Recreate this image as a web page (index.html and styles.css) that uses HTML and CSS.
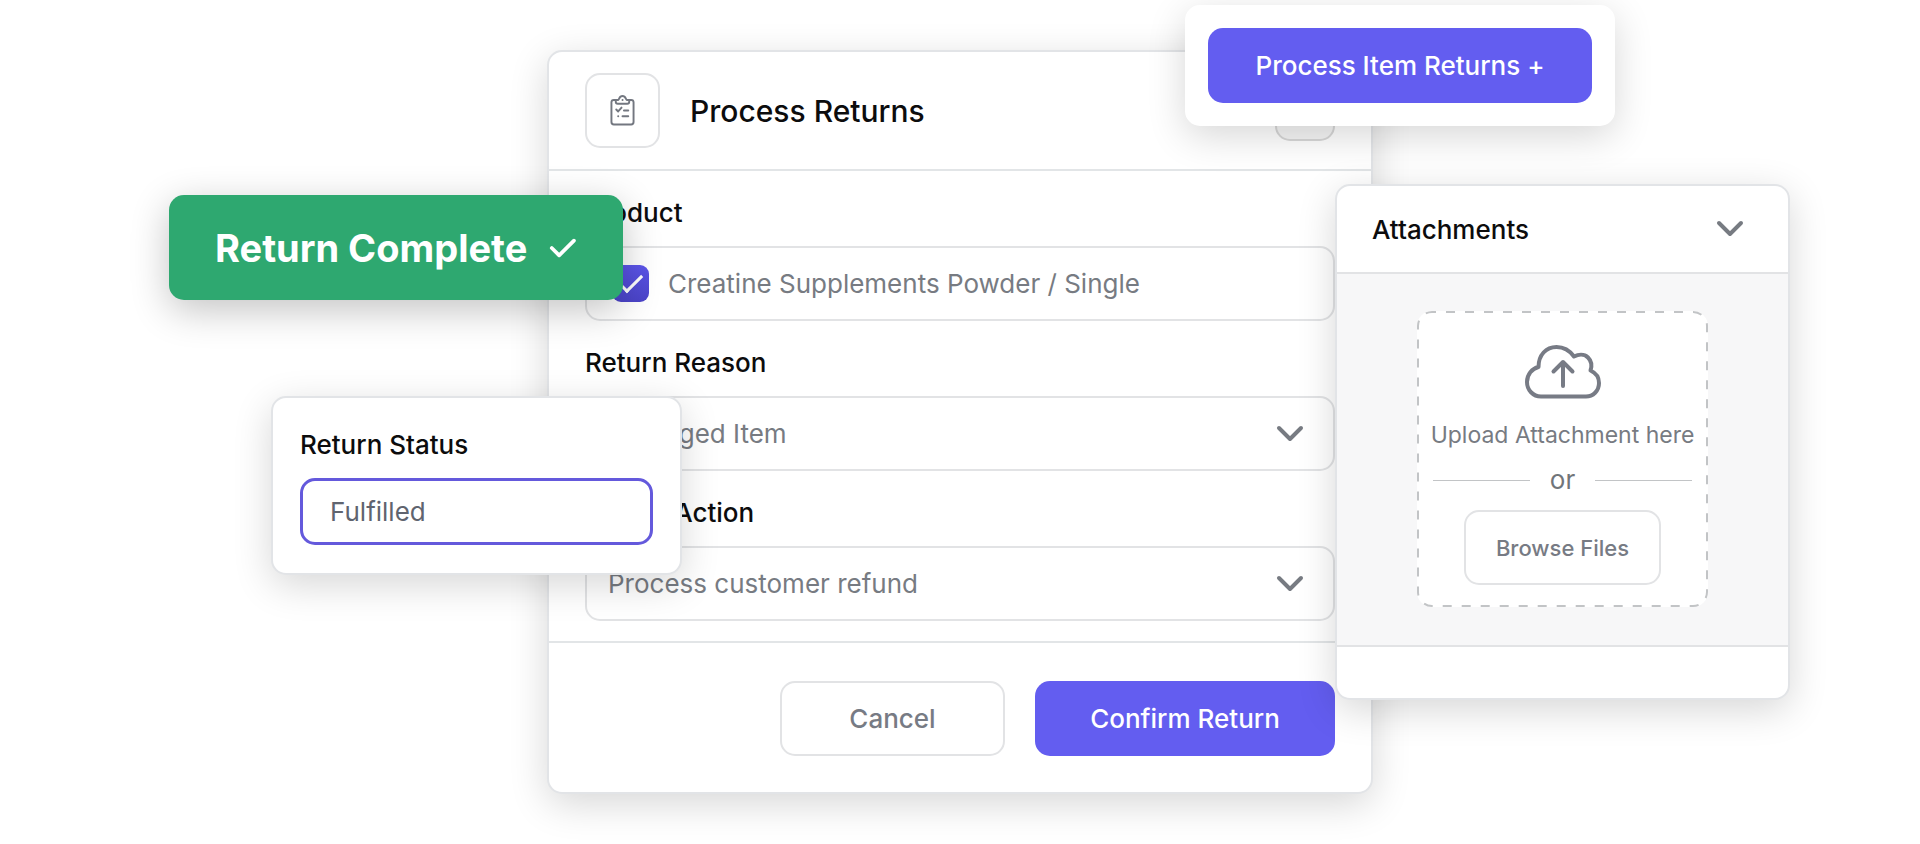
FILE: index.html
```html
<!DOCTYPE html>
<html lang="en">
<head>
    <meta charset="UTF-8">
    <meta name="viewport" content="width=device-width, initial-scale=1.0">
    <title>Process Returns</title>
    <link rel="stylesheet" href="styles.css">
</head>
<body>
    <main class="stage">
        <form class="card returns">
            <header class="returns-header">
                <span class="icon-box">
                    <svg width="25" height="33" viewBox="0 0 26 34" fill="none" stroke="#737780" stroke-width="2" stroke-linecap="round" stroke-linejoin="round">
                        <path d="M6 6H4a2.500 2.500 0 0 0-2.500 2.500V29A2.500 2.500 0 0 0 4 31.500H22a2.500 2.500 0 0 0 2.500-2.500V8.500A2.500 2.500 0 0 0 22 6H20"/>
                        <path d="M6 6H8.500C9.500 6 9.500 2 13 2S16.500 6 17.500 6H20V8a2 2 0 0 1-2 2H8a2 2 0 0 1-2-2Z"/>
                        <path d="M6.500 16l2 2 3.500-4M14.500 17H19M13 23H19M8.500 23h.1M13 6h.1"/>
                    </svg>
                </span>
                <h1>Process Returns</h1>
                <button type="button" class="close-btn" aria-label="Close"></button>
            </header>

            <div class="returns-body">
                <h2 class="field-label">Product</h2>
                <label class="field product">
                    <input type="checkbox" class="check" checked>
                    <span>Creatine Supplements Powder / Single</span>
                </label>

                <label class="field-label" for="reason">Return Reason</label>
                <div class="select">
                    <select class="field" id="reason">
                        <option>Damaged Item</option>
                    </select>
                    <svg class="chevron" width="28" height="18" viewBox="0 0 28 18"><path d="M3 3l11 11L25 3"/></svg>
                </div>

                <label class="field-label" for="action">Return Action</label>
                <div class="select">
                    <select class="field" id="action">
                        <option>Process customer refund</option>
                    </select>
                    <svg class="chevron" width="28" height="18" viewBox="0 0 28 18"><path d="M3 3l11 11L25 3"/></svg>
                </div>
            </div>

            <footer class="returns-footer">
                <button type="button" class="btn btn-outline btn-cancel">Cancel</button>
                <button type="button" class="btn btn-primary btn-confirm">Confirm Return</button>
            </footer>
        </form>

        <div class="card start">
            <button type="button" class="btn btn-primary">Process Item Returns +</button>
        </div>

        <div class="toast" role="status">
            Return Complete
            <svg width="30" height="24" viewBox="0 0 30 24"><path d="M3 12l8 8L27 4"/></svg>
        </div>

        <div class="card status">
            <label for="status">Return Status</label>
            <input type="text" id="status" value="Fulfilled">
        </div>

        <section class="card attachments">
            <header class="attachments-header">
                <h2>Attachments</h2>
                <svg class="chevron" width="28" height="18" viewBox="0 0 28 18"><path d="M3 3l11 11L25 3"/></svg>
            </header>
            <div class="attachments-body">
                <div class="dropzone">
                    <svg class="dashes"><rect x="1" y="1" rx="14"/></svg>
                    <svg class="cloud" width="76" height="54" viewBox="0 0 76 54">
                        <path d="M16 51.500C8 51.500 2 45 2 37C2 29.500 7 23.500 13.500 22C13.500 10 21 2 31.500 2C39 2 45 6 49 11.500C53 9.500 59 8.500 63 12.500C67 16.500 67 21 65.500 25.500C71 28 74 33 74 38C74 46 68 51.500 61 51.500Z"/>
                        <path d="M38 41V17M28.500 26.500L38 17l9.500 9.500"/>
                    </svg>
                    <p>Upload Attachment here</p>
                    <div class="or">or</div>
                    <button type="button" class="btn btn-outline btn-browse">Browse Files</button>
                </div>
            </div>
            <footer class="attachments-footer"></footer>
        </section>
    </main>
</body>
</html>
```
FILE: styles.css
```css
* {
    box-sizing: border-box;
}
body {
    margin: 0;
    background: #fff;
    color: #0c0c0d;
    font-family: Inter, "Liberation Sans", sans-serif;
    font-size: 26px;
    overflow-x: hidden;
}
h1, h2, p {
    margin: 0;
    font-weight: 500;
}
button, input, select {
    font: inherit;
}
.stage {
    position: relative;
    width: 826px;
    margin: 0 auto;
    padding: 50px 0;
}
.card {
    background: #fff;
    border: 2px solid #e2e4e7;
    border-radius: 15px;
    box-shadow: 0 10px 38px rgba(0, 0, 0, 0.16);
}

/* buttons */
.btn {
    height: 75px;
    border: 2px solid transparent;
    border-radius: 15px;
    font-weight: 500;
    cursor: pointer;
}
.btn-primary {
    background: #635df0;
    color: #fff;
}
.btn-outline {
    background: #fff;
    border-color: #e2e3e5;
    color: #777b84;
}

/* main form */
.returns-header {
    display: flex;
    align-items: center;
    height: 119px;
    padding: 0 36px;
    border-bottom: 2px solid #e2e5e7;
}
.icon-box {
    display: flex;
    align-items: center;
    justify-content: center;
    width: 75px;
    height: 75px;
    margin-right: 30px;
    border: 2px solid #e2e3e5;
    border-radius: 15px;
}
h1 {
    font-size: 30px;
}
.close-btn {
    width: 60px;
    height: 60px;
    margin-left: auto;
    background: #f6f6f6;
    border: 2px solid #d8d8d8;
    border-radius: 15px;
}
.returns-body {
    padding: 0 36px 20px;
    border-bottom: 2px solid #e2e5e7;
}
.field-label {
    display: block;
    padding: 26px 0 17px;
    font-size: 26px;
    font-weight: 500;
    line-height: 32px;
}
.field {
    display: flex;
    align-items: center;
    width: 100%;
    height: 75px;
    padding: 0 21px;
    background: none;
    border: 2px solid #e2e3e5;
    border-radius: 15px;
    color: #777b82;
    appearance: none;
}
.product {
    gap: 19px;
    padding: 0 25px;
}
.check {
    display: grid;
    place-items: center;
    width: 37px;
    height: 37px;
    margin: 0;
    background: linear-gradient(#5c55ea, #4b44c8);
    border-radius: 9px;
    appearance: none;
}
.check:checked::after {
    content: "";
    width: 10px;
    height: 20px;
    margin-bottom: 6px;
    border: solid #fff;
    border-width: 0 3px 3px 0;
    transform: rotate(45deg);
}
.select {
    position: relative;
}
.chevron {
    fill: none;
    stroke: #777b82;
    stroke-width: 4;
    stroke-linecap: round;
    stroke-linejoin: round;
}
.select .chevron {
    position: absolute;
    top: 29px;
    right: 31px;
    pointer-events: none;
}
.returns-footer {
    display: flex;
    justify-content: flex-end;
    gap: 30px;
    padding: 38px 36px 36px;
}
.btn-cancel {
    width: 225px;
}
.btn-confirm {
    width: 300px;
}

/* floating pieces */
.start {
    position: absolute;
    top: 5px;
    left: 638px;
    padding: 21px;
    border-color: #fff;
}
.start .btn {
    display: block;
    width: 384px;
}
.toast {
    position: absolute;
    top: 195px;
    left: -378px;
    display: flex;
    align-items: center;
    gap: 22px;
    width: 454px;
    height: 105px;
    padding: 0 46px;
    background: #2ea870;
    border-radius: 15px;
    box-shadow: 0 10px 38px rgba(0, 0, 0, 0.24);
    color: #fff;
    font-size: 38px;
    font-weight: 700;
    white-space: nowrap;
}
.toast svg {
    fill: none;
    stroke: #fff;
    stroke-width: 4;
    stroke-linecap: round;
    stroke-linejoin: round;
}
.status {
    position: absolute;
    top: 396px;
    left: -276px;
    width: 411px;
    padding: 31px 27px 28px;
}
.status label {
    display: block;
    margin-bottom: 17px;
    font-weight: 500;
    line-height: 32px;
}
.status input {
    display: block;
    width: 100%;
    height: 67px;
    padding: 0 27px;
    background: #fff;
    border: 3px solid #6459dc;
    border-radius: 15px;
    color: #60646f;
    outline: none;
}

/* attachments panel */
.attachments {
    position: absolute;
    top: 184px;
    left: 788px;
    width: 455px;
}
.attachments-header {
    display: flex;
    align-items: center;
    justify-content: space-between;
    height: 88px;
    padding: 0 44px 0 35px;
    border-bottom: 2px solid #e2e3e5;
}
.attachments-header h2 {
    font-size: 26px;
}
.attachments-body {
    padding: 37px 0 38px;
    background: #f7f7f8;
    border-bottom: 2px solid #e2e3e5;
}
.dropzone {
    position: relative;
    display: flex;
    flex-direction: column;
    align-items: center;
    width: 291px;
    margin: 0 auto;
    padding: 34px 16px 22px;
    background: #fff;
    border-radius: 15px;
}
.dashes {
    position: absolute;
    top: 0;
    left: 0;
    width: 100%;
    height: 100%;
    fill: none;
    stroke: #c2c4c6;
    stroke-width: 2;
    stroke-dasharray: 9 10;
    stroke-dashoffset: 5;
    pointer-events: none;
}
.dashes rect {
    width: calc(100% - 2px);
    height: calc(100% - 2px);
}
.cloud {
    fill: none;
    stroke: #777b85;
    stroke-width: 4;
    stroke-linecap: round;
    stroke-linejoin: round;
}
.dropzone p {
    margin-top: 20px;
    color: #777b82;
    font-size: 23px;
    font-weight: 400;
    line-height: 32px;
    white-space: nowrap;
}
.or {
    display: flex;
    align-items: center;
    gap: 20px;
    width: 100%;
    margin: 13px 0 14px;
    color: #71757a;
    line-height: 32px;
}
.or::before, .or::after {
    content: "";
    flex: 1;
    height: 1px;
    background: #c2c4c6;
}
.btn-browse {
    width: 197px;
    font-size: 22px;
}
.attachments-footer {
    height: 51px;
}
```
